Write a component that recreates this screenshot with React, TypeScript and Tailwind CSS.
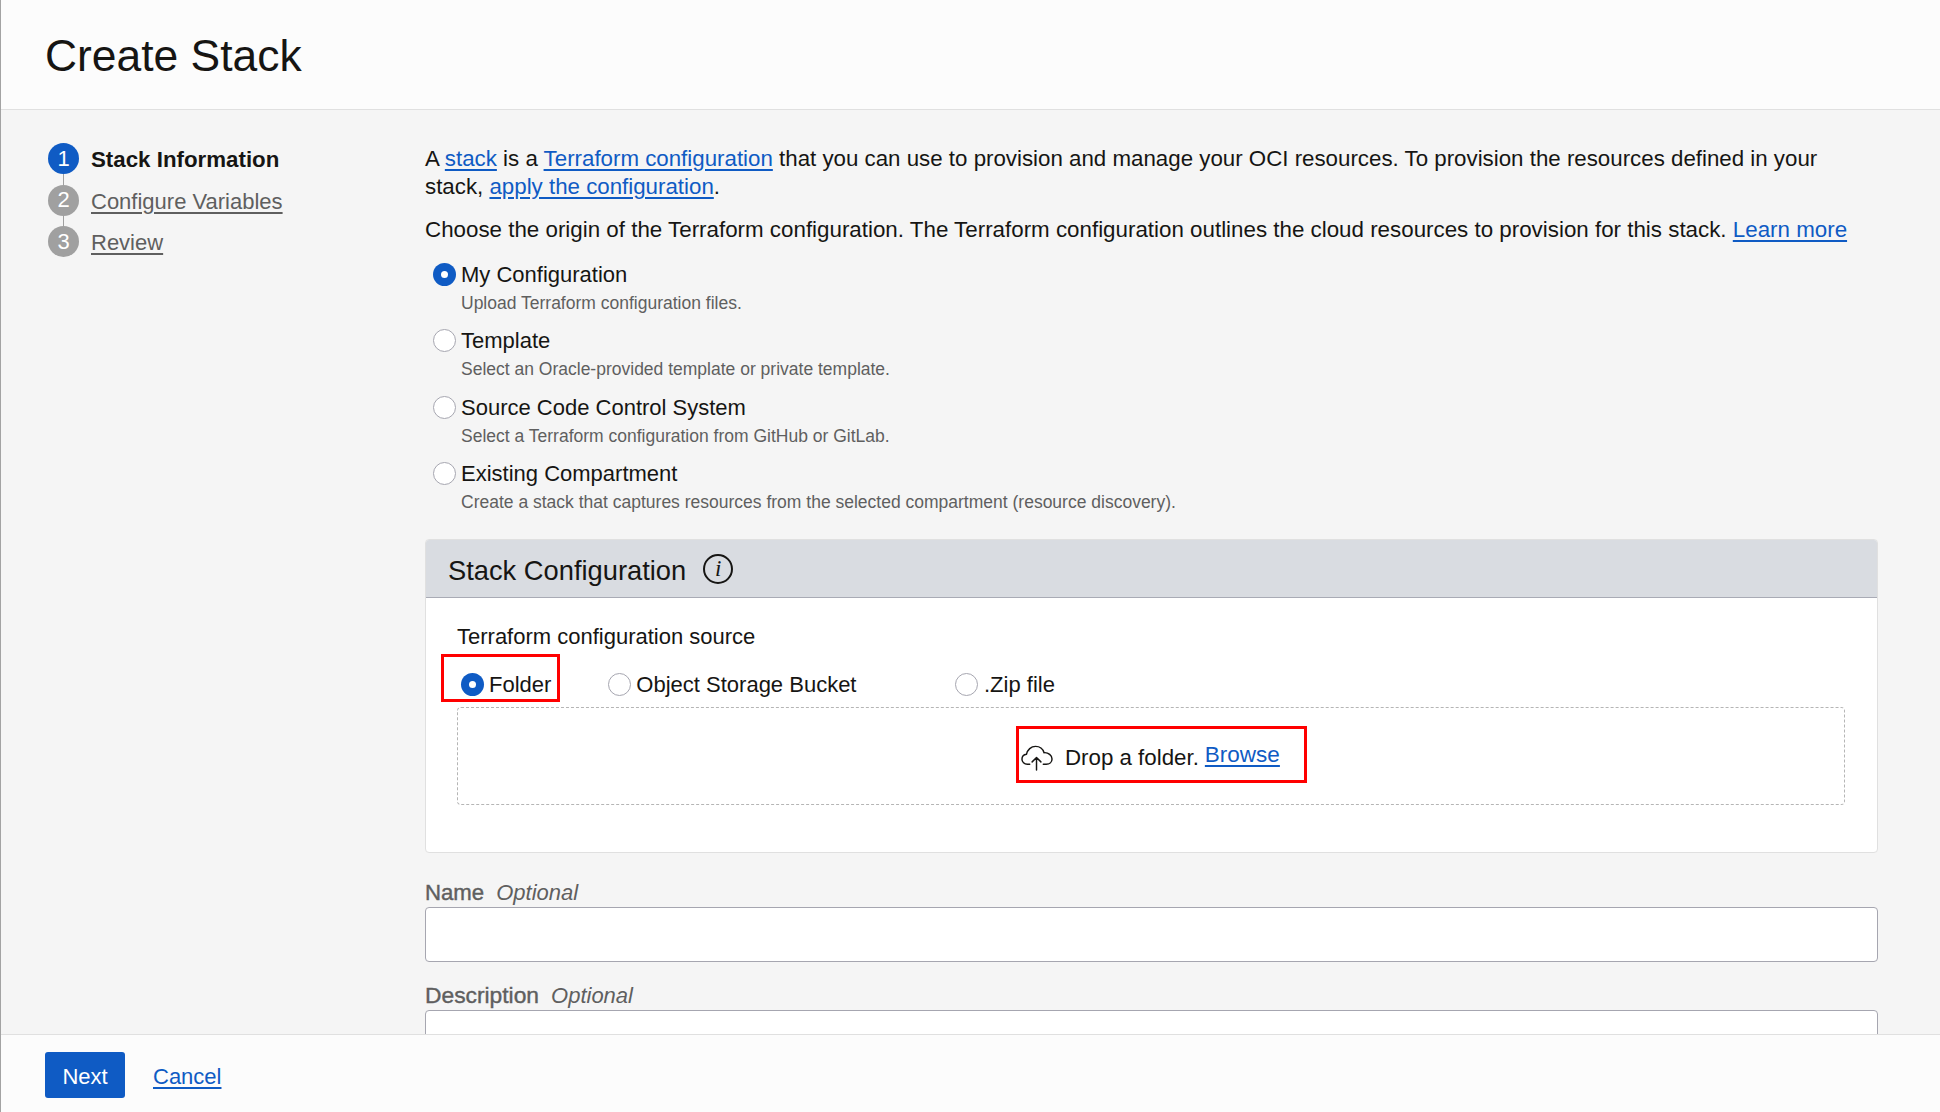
import React from "react";

function Radio({ checked }: { checked?: boolean }) {
  return checked ? (
    <span className="flex h-[23px] w-[23px] shrink-0 items-center justify-center rounded-full bg-[#0f5bc4]">
      <span className="h-[7px] w-[7px] rounded-full bg-white" />
    </span>
  ) : (
    <span className="block h-[23px] w-[23px] shrink-0 rounded-full border border-[#a6a6b0] bg-white" />
  );
}

function Origin({ label, hint, checked }: { label: string; hint: string; checked?: boolean }) {
  return (
    <div className="h-[66.3px]">
      <div className="flex h-[23px] items-center gap-[5px]">
        <Radio checked={checked} />
        <span className="text-[22px] leading-[23px] text-[#161513]">{label}</span>
      </div>
      <div className="ml-[28px] mt-[7px] text-[17.5px] leading-[20px] text-[#5f5f5f]">{hint}</div>
    </div>
  );
}

function Step({ n, label, active }: { n: number; label: string; active?: boolean }) {
  return (
    <div className="relative flex h-[41.5px] items-start gap-[12px]">
      <span
        className={
          "z-10 flex h-[31px] w-[31px] shrink-0 items-center justify-center rounded-full text-[22px] leading-none text-white " +
          (active ? "bg-[#0f5bc4]" : "bg-[#a0a0a0]")
        }
      >
        {n}
      </span>
      {active ? (
        <span className="pt-px text-[22.3px] font-bold leading-[31px] text-[#161513]">{label}</span>
      ) : (
        <span className="mt-px text-[22px] leading-[31px] text-[#5f5f5f] underline underline-offset-[3px]">{label}</span>
      )}
    </div>
  );
}

function Link({ children }: { children: React.ReactNode }) {
  return <a className="text-[#0f5bc4] underline underline-offset-[3px]">{children}</a>;
}

export default function App() {
  return (
    <div
      className="flex h-[1112px] w-[1940px] flex-col overflow-hidden border-l border-[#a3a3a3] bg-[#f5f5f5] text-[#161513]"
      style={{ fontFamily: '"Liberation Sans", Arial, sans-serif' }}
    >
      <header className="flex h-[110px] shrink-0 items-center border-b border-[#e0e0e0] bg-[#fcfcfc] pl-[44px]">
        <h1 className="pt-[4px] text-[44.4px] leading-none text-[#161513]">Create Stack</h1>
      </header>

      <div className="flex min-h-0 flex-1 overflow-hidden">
        <nav className="w-[424px] shrink-0 pl-[47px] pt-[33px]">
          <div className="relative">
            <span className="absolute left-[15px] top-[20px] h-[80px] w-px bg-[#a0a0a0]" />
            <Step n={1} label="Stack Information" active />
            <Step n={2} label="Configure Variables" />
            <Step n={3} label="Review" />
          </div>
        </nav>

        <main className="w-[1453px] shrink-0 pt-[35px]">
          <p className="text-[22.3px] leading-[27.5px]">
            A <Link>stack</Link> is a <Link>Terraform configuration</Link> that you can use to provision and manage your
            OCI resources. To provision the resources defined in your stack, <Link>apply the configuration</Link>.
          </p>
          <p className="mt-[16px] whitespace-nowrap text-[22.35px] leading-[28px]">
            Choose the origin of the Terraform configuration. The Terraform configuration outlines the cloud resources to
            provision for this stack. <Link>Learn more</Link>
          </p>

          <div className="ml-[8px] mt-[19px] h-[265px]">
            <Origin checked label="My Configuration" hint="Upload Terraform configuration files." />
            <Origin label="Template" hint="Select an Oracle-provided template or private template." />
            <Origin label="Source Code Control System" hint="Select a Terraform configuration from GitHub or GitLab." />
            <Origin
              label="Existing Compartment"
              hint="Create a stack that captures resources from the selected compartment (resource discovery)."
            />
          </div>

          <section className="mt-[11px] h-[314px] overflow-hidden rounded-[4px] border border-[#e0e0e0] bg-white">
            <div className="flex h-[58px] items-center gap-[17px] border-b border-[#a9abb5] bg-[#d9dce1] pl-[22px]">
              <h2 className="pt-[4px] text-[27.3px] leading-none">Stack Configuration</h2>
              <span
                className="flex h-[30px] w-[30px] items-center justify-center rounded-full border-2 border-[#161513] text-[23px] italic leading-none"
                style={{ fontFamily: '"Liberation Serif", serif' }}
              >
                i
              </span>
            </div>
            <div className="px-[31px] pt-[25px]">
              <div className="text-[22px] leading-[28px]">Terraform configuration source</div>
              <div className="relative mt-[22px] flex h-[23px] items-center">
                <span className="absolute left-[-16px] top-[-19px] h-[48px] w-[119px] border-[3px] border-[#ff0000]" />
                <span className="ml-[4px] flex items-center gap-[5px]">
                  <Radio checked />
                  <span className="text-[22px] leading-[23px]">Folder</span>
                </span>
                <span className="ml-[57px] flex items-center gap-[5px]">
                  <Radio />
                  <span className="text-[22px] leading-[23px]">Object Storage Bucket</span>
                </span>
                <span className="ml-[99px] flex items-center gap-[5.5px]">
                  <Radio />
                  <span className="text-[22px] leading-[23px]">.Zip file</span>
                </span>
              </div>
              <div className="mr-px mt-[11px] flex h-[98px] items-center justify-center rounded-[4px] border border-dashed border-[#b5b5b5] pb-[4px] pl-[21px]">
                <div className="relative flex h-[57px] w-[291px] items-center border-[3px] border-[#ff0000] pl-[2px] pt-[8px]">
                  <svg width="32" height="26" viewBox="0 0 33 26" fill="none" stroke="#161513" strokeWidth="1.5" strokeLinecap="round" strokeLinejoin="round" className="shrink-0">
                    <path d="M9 19.5H6.5C3.4 19.5 1 17.2 1 14.3c0-2.7 2-4.9 4.7-5.2C6.6 4.4 10.4 1 15 1c4.100 0 7.600 2.700 8.800 6.500 4.400-.4 8.200 2.800 8.200 6.500 0 3.100-2.500 5.500-6 5.500h-3" />
                    <path d="M16 25.500V12.500M11.500 17l4.500-4.500 4.500 4.500" />
                  </svg>
                  <span className="ml-[12px] text-[22.3px] leading-none">Drop a folder.</span>
                  <a className="ml-[6px] -translate-y-[3px] text-[22.5px] leading-none text-[#0f5bc4] underline underline-offset-[3px]">Browse</a>
                </div>
              </div>
            </div>
          </section>

          <div className="mt-[27px] flex h-[26px] items-baseline gap-[12px] text-[#5f5f5f]">
            <span className="text-[22.2px] leading-[26px] [-webkit-text-stroke:0.4px_#5f5f5f]">Name</span>
            <span className="text-[22px] italic leading-[26px]">Optional</span>
          </div>
          <div className="mt-px h-[55px] rounded-[4px] border border-[#a6a6b0] bg-white" />
          <div className="mt-[20px] flex h-[26px] items-baseline gap-[12px] text-[#5f5f5f]">
            <span className="text-[22.8px] leading-[26px] [-webkit-text-stroke:0.4px_#5f5f5f]">Description</span>
            <span className="text-[22px] italic leading-[26px]">Optional</span>
          </div>
          <div className="mt-[2px] h-[55px] rounded-[4px] border border-[#a6a6b0] bg-white" />
        </main>
      </div>

      <footer className="flex h-[78px] shrink-0 items-start border-t border-[#e0e0e0] bg-[#fcfcfc] pl-[44px] pt-[17px]">
        <button className="flex h-[46px] w-[80px] items-center justify-center rounded-[3px] bg-[#0f5bc4] pt-[3px] text-[22px] leading-none text-white">
          Next
        </button>
        <a className="ml-[28px] flex h-[46px] items-center pt-[2px] text-[22px] text-[#0f5bc4] underline underline-offset-[3px]">Cancel</a>
      </footer>
    </div>
  );
}
